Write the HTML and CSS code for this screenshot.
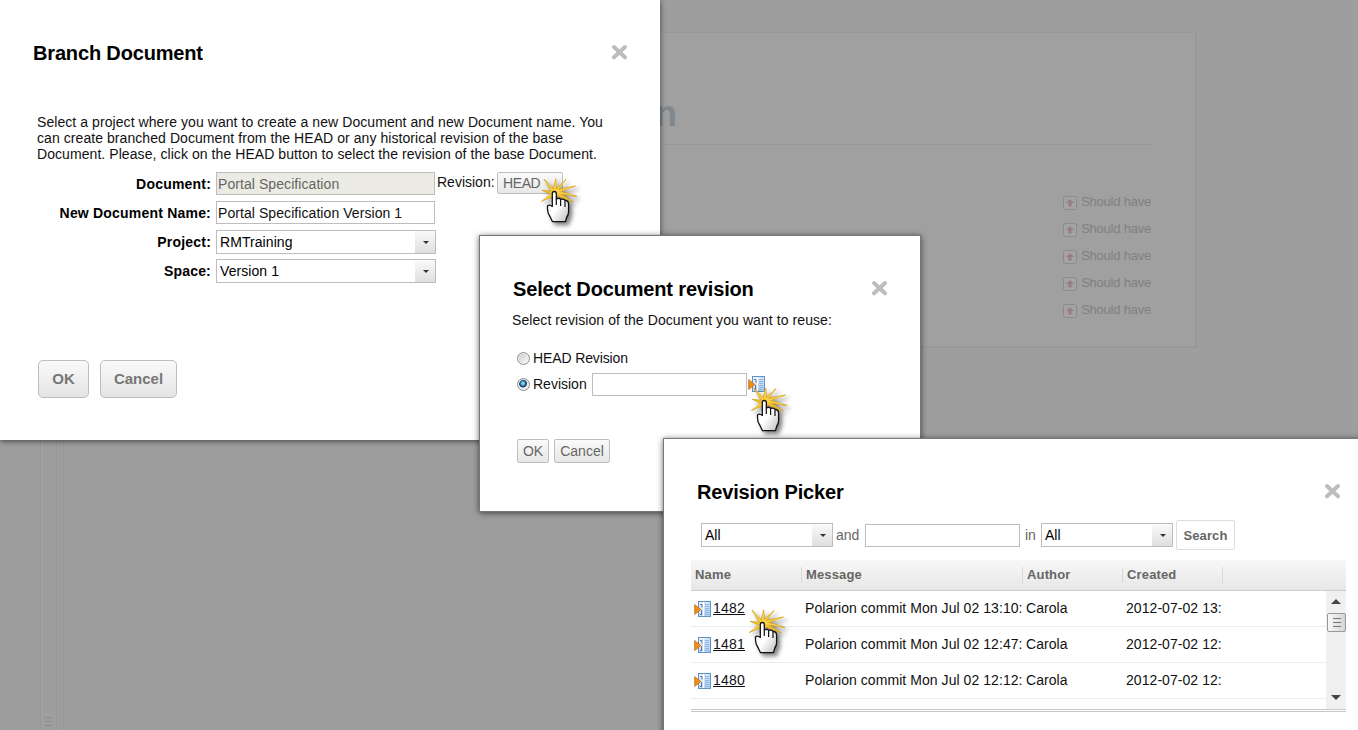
FILE: index.html
```html
<!DOCTYPE html>
<html lang="en">
<head>
<meta charset="utf-8">
<title>Branch Document</title>
<link rel="stylesheet" href="styles.css">
</head>
<body>
<svg class="defs" width="0" height="0" aria-hidden="true">
  <defs>
    <linearGradient id="palm" x1="0" y1="0" x2="1" y2="1"><stop offset=".5" stop-color="#fff"/><stop offset="1" stop-color="#bbb"/></linearGradient>
    <linearGradient id="page-fill" x1="0" y1="0" x2="1" y2="1"><stop offset="0" stop-color="#eef6ff"/><stop offset="1" stop-color="#a9cbef"/></linearGradient>
    <symbol id="close" viewBox="0 0 17 16"><path d="M3 3 14 13.300M14 3 3 13.300" stroke="#bdbdbd" stroke-width="4" stroke-linecap="round"/></symbol>
    <symbol id="picker" viewBox="0 0 18 17">
      <rect x="4.500" y=".5" width="12" height="15" fill="url(#page-fill)" stroke="#6291c5"/>
      <path d="M9.500 1v14" stroke="#fff"/>
      <path d="M11 3.500h4M11 5.500h4M11 7.500h4M11 9.500h4M11 11.500h4M11 13.500h4" stroke="#8fb4df"/>
      <path d="M6 3.500h2v3M7.500 9v4M6 13.500h2" stroke="#61779b" fill="none"/>
      <path d="M.7 3.500v10L6.800 8.500z" fill="#f39018" stroke="#b8600c" stroke-width=".7"/>
    </symbol>
    <symbol id="cursor" viewBox="0 0 44 52">
      <path d="M4 1 13.200 11 15.700 .8 16.600 10.300 26 1.500 18.800 11.200 35.500 8 21 13.300 37 18.500 21 16 33.500 24 18 18 13 18.500 1.500 23.500 10.800 16 2 12.300 11 13.200Z" fill="#f3c430" stroke="#d9a41c" stroke-width=".8" stroke-linejoin="round"/>
      <path d="m6 4 8 10M15.500 4l-1 10M24 4l-9 10M31 9.500 15 14M32 17l-17-3M5 21l9-7" stroke="#ffe46a" fill="none" stroke-width=".6"/>
      <path d="M12.300 29V15.500q0-2 2-2t2 2V21q3-1.500 4.500.5 3-1 4.500 1 3.300 0 3.300 4v7q0 3-1.800 5.500l-1.300 4.700H12.500L10 38.500Q7.500 35 7.500 31v-3q2-2 4.800.5" fill="url(#palm)" stroke="#111" stroke-width="1.300" stroke-linejoin="round"/>
      <path d="M16.300 21v6M20.600 21.500V28M25 22.500V29" stroke="#111" stroke-width="1.200"/>
    </symbol>
    <symbol id="priority" viewBox="0 0 16 16">
      <rect x="1.500" y="1.500" width="13" height="13" rx="2" fill="#a5a2a2" stroke="#8b8b8b"/>
      <path d="m8 4 4 4H9.500v3.500h-3V8H4z" fill="#957e83"/>
    </symbol>
  </defs>
</svg>

<main class="desktop">
  <div class="rail"><i class="grip"></i></div>
  <section class="page">
    <h1 class="page-title">Portal Specification</h1>
    <ul class="priorities">
      <li><svg class="prio"><use href="#priority"/></svg>Should have</li>
      <li><svg class="prio"><use href="#priority"/></svg>Should have</li>
      <li><svg class="prio"><use href="#priority"/></svg>Should have</li>
      <li><svg class="prio"><use href="#priority"/></svg>Should have</li>
      <li><svg class="prio"><use href="#priority"/></svg>Should have</li>
    </ul>
  </section>

  <section class="dialog branch">
    <header class="head"><h2>Branch Document</h2><svg class="x"><use href="#close"/></svg></header>
    <p class="intro">Select a project where you want to create a new Document and new Document name. You<br>can create branched Document from the HEAD or any historical revision of the base<br>Document. Please, click on the HEAD button to select the revision of the base Document.</p>
    <div class="form">
      <div class="row"><b>Document:</b><span class="field off">Portal Specification</span><span class="rev">Revision:</span><button class="small head-btn">HEAD</button></div>
      <div class="row"><b>New Document Name:</b><span class="field">Portal Specification Version 1</span></div>
      <div class="row"><b>Project:</b><span class="select">RMTraining<i class="drop"></i></span></div>
      <div class="row"><b>Space:</b><span class="select">Version 1<i class="drop"></i></span></div>
    </div>
    <footer class="actions"><button class="big ok">OK</button><button class="big">Cancel</button></footer>
  </section>

  <section class="dialog revision">
    <header class="head"><h2>Select Document revision</h2><svg class="x"><use href="#close"/></svg></header>
    <p class="hint">Select revision of the Document you want to reuse:</p>
    <div class="option"><i class="radio"></i><span class="head-rev">HEAD Revision</span></div>
    <div class="option second"><i class="radio on"></i><span>Revision</span><span class="field blank"></span><svg class="pick"><use href="#picker"/></svg></div>
    <footer class="mini-actions"><button class="small ok">OK</button><button class="small">Cancel</button></footer>
  </section>

  <section class="dialog finder">
    <header class="head"><h2>Revision Picker</h2><svg class="x"><use href="#close"/></svg></header>
    <div class="search"><span class="select">All<i class="drop"></i></span><span class="and">and</span><span class="field blank"></span><span class="in">in</span><span class="select">All<i class="drop"></i></span><button class="go">Search</button></div>
    <div class="table">
      <div class="cols"><span>Name</span><span>Message</span><span>Author</span><span>Created</span></div>
      <div class="body">
        <div class="lines">
          <div class="line"><a><svg class="pick"><use href="#picker"/></svg><u>1482</u></a><span>Polarion commit Mon Jul 02 13:10:</span><span>Carola</span><span>2012-07-02 13:</span></div>
          <div class="line"><a><svg class="pick"><use href="#picker"/></svg><u>1481</u></a><span>Polarion commit Mon Jul 02 12:47:</span><span>Carola</span><span>2012-07-02 12:</span></div>
          <div class="line"><a><svg class="pick"><use href="#picker"/></svg><u>1480</u></a><span>Polarion commit Mon Jul 02 12:12:</span><span>Carola</span><span>2012-07-02 12:</span></div>
        </div>
        <div class="scroll"><i class="up"></i><i class="thumb"></i><i class="down"></i></div>
      </div>
    </div>
  </section>

  <svg class="cursor one"><use href="#cursor"/></svg>
  <svg class="cursor two"><use href="#cursor"/></svg>
  <svg class="cursor three"><use href="#cursor"/></svg>
</main>
</body>
</html>
```
FILE: styles.css
```css
* { box-sizing: border-box; }
body { margin: 0; font: 14px/16px "Liberation Sans", Arial, sans-serif; color: #111; overflow: hidden; }
h1, h2, p, ul { margin: 0; padding: 0; }
button { font: inherit; padding: 0; margin: 0; color: #666; }
.defs { position: absolute; }
.desktop { position: relative; width: 1358px; height: 730px; background: #9e9e9e; overflow: hidden; }

/* dimmed document behind the dialogs */
.rail { position: absolute; left: 40px; top: 0; width: 24px; height: 730px; background: linear-gradient(90deg, #979797 1px, #a0a0a0 1px 4px, #9a9a9a 4px 5px, #9e9e9e 5px 16px, #959595 16px 17px, #a1a1a1 17px 19px, #989898 19px 20px, #9e9e9e 20px 23px, #9a9a9a 23px); }
.grip { position: absolute; left: 5px; bottom: 2px; width: 7px; height: 11px; background: repeating-linear-gradient(#8d8d8d 0 1px, transparent 1px 4px); }
.page { position: absolute; left: 110px; top: 32px; width: 1087px; height: 316px; padding: 57px 44px 0; background: #a0a0a0; border: 1px solid #989898; border-width: 1px 2px 2px 1px; }
.page-title { width: 522px; height: 54px; font-size: 36px; line-height: 48px; text-align: right; color: #81898f; }
.priorities { list-style: none; border-top: 1px solid #989898; padding-top: 48px; display: flex; flex-direction: column; align-items: flex-end; color: #808080; font-size: 13px; }
.priorities li { height: 27px; display: flex; align-items: flex-start; gap: 3px; line-height: 18px; letter-spacing: -.22px; }
.prio { width: 16px; height: 16px; margin-top: 2px; }

.dialog { position: absolute; background: #fff; border: 1px solid #777; box-shadow: 0 1px 6px rgba(0, 0, 0, .6); }
.head { display: flex; justify-content: space-between; height: 24px; }
.head h2 { font-size: 20px; line-height: 24px; color: #000; letter-spacing: -.16px; }
.x { width: 17px; height: 16px; margin-top: 3px; }

.branch { left: 0; top: 0; width: 660px; height: 440px; padding: 41px 32px 0 33px; border: 0; }
.intro { padding: 49px 0 0 4px; white-space: nowrap; letter-spacing: .068px; }
.form { padding-top: 10px; }
.row { height: 29px; display: flex; align-items: flex-start; letter-spacing: .07px; }
.row b { width: 178px; margin-right: 5px; text-align: right; line-height: 24px; color: #000; letter-spacing: .2px; }
.field { width: 219px; height: 23px; border: 1px solid #bdbdbd; padding-left: 1px; line-height: 22px; white-space: nowrap; }
.off { background: #ebebe4; color: #666; }
.rev { line-height: 20px; margin: 0 3px 0 2px; width: 57px; white-space: nowrap; letter-spacing: 0; }
.select { display: flex; justify-content: space-between; width: 220px; height: 24px; border: 1px solid #bdbdbd; padding-left: 3px; line-height: 22px; color: #000; }
.drop { width: 20px; background: linear-gradient(#fafafa, #dedede); display: flex; align-items: center; justify-content: center; }
.drop::after { content: ""; border: 3px solid transparent; border-top-color: #333; border-bottom: 0; margin-left: 1px; }
.small { height: 24px; width: 56px; border: 1px solid #bfbfbf; border-radius: 2px; background: linear-gradient(#fafafa, #e7e7e7); }
.small.ok { width: 32px; }
.head-btn { width: 66px; height: 22px; text-align: left; padding-left: 5px; letter-spacing: -.4px; }
.actions { display: flex; gap: 11px; padding: 72px 0 0 5px; }
.big { width: 77px; height: 38px; border: 1px solid #bdbdbd; border-radius: 5px; background: linear-gradient(#fafafa, #e4e4e4); font-weight: bold; font-size: 15px; color: #777; }
.big.ok { width: 51px; }

.revision { left: 479px; top: 235px; width: 442px; height: 277px; padding: 41px 32px 0 33px; }
.hint { margin: 11px 0 0 -1px; letter-spacing: .08px; }
.option { display: flex; align-items: center; height: 24px; margin-top: 18px; padding-left: 4px; }
.option.second { margin-top: 2px; }
.head-rev { letter-spacing: -.12px; }
.radio { width: 13px; height: 13px; margin-right: 3px; border: 1px solid #8b8f94; border-radius: 50%; box-shadow: inset 0 0 0 1px #eee; background: linear-gradient(135deg, #c7c7c7, #fff); }
.radio.on { background: radial-gradient(circle at 45% 40%, #8ed1f4 0 1px, #174d78 3px, #12324f 3.500px, #e5edf3 4.500px); }
.option .blank { margin-left: 5px; }
.blank { width: 155px; }
.pick { width: 18px; height: 17px; flex: none; margin-left: 1px; }
.mini-actions { display: flex; gap: 5px; padding: 43px 0 0 4px; }

.finder { left: 663px; top: 438px; width: 720px; height: 310px; padding: 41px 0 0 27px; }
.finder .head { padding-left: 6px; width: 650px; }
.search { display: flex; align-items: center; height: 30px; margin: 16px 0 0 10px; color: #666; }
.search .select { width: 132px; }
.and { width: 32px; padding-left: 3px; }
.in { width: 21px; padding-left: 5px; }
.go { width: 59px; height: 30px; margin-left: 3px; border: 1px solid #ddd; border-radius: 2px; background: #fff; font-weight: bold; font-size: 13px; letter-spacing: .1px; padding-top: 1px; }
.table { width: 655px; margin-top: 10px; border-bottom: 3px double #c6c6c6; }
.cols, .line { display: grid; grid-template-columns: 111px 221px 100px 100px; }
.cols { height: 31px; align-items: center; background: linear-gradient(#f7f7f7, #e7e7e7); border-bottom: 1px solid #ccc; color: #666; font-weight: bold; font-size: 13px; letter-spacing: .15px; }
.cols span { padding-left: 4px; border-right: 1px solid #d9d9d9; }
.body { display: flex; height: 118px; }
.lines { flex: 1; }
.line { height: 36px; align-items: center; border-bottom: 1px solid #ececec; padding-bottom: 1px; letter-spacing: .06px; }
.line span { padding-left: 3px; white-space: nowrap; }
.line a { display: flex; align-items: center; gap: 1px; padding-left: 2px; }
.line .pick { position: relative; top: 1px; }
.line u { letter-spacing: .2px; }
.scroll { width: 20px; background: #f0f0f0; display: flex; flex-direction: column; align-items: center; padding: 8px 0 9px; }
.up { border: 5px solid transparent; border-bottom-color: #444; border-top: 0; }
.down { border: 5px solid transparent; border-top-color: #444; border-bottom: 0; margin-top: auto; }
.thumb { width: 19px; height: 19px; margin-top: 9px; border: 1px solid #999; border-radius: 2px; background: linear-gradient(#777, #777) 5px 4px / 8px 1px no-repeat, linear-gradient(#777, #777) 5px 8px / 8px 1px no-repeat, linear-gradient(#777, #777) 5px 12px / 8px 1px no-repeat, linear-gradient(90deg, #f7f7f7, #d5d5d5); }

.cursor { position: absolute; width: 44px; height: 52px; filter: drop-shadow(3px 3px 2px rgba(0, 0, 0, .5)); }
.one { left: 540px; top: 178px; }
.two { left: 750px; top: 387px; }
.three { left: 748px; top: 609px; }
```
